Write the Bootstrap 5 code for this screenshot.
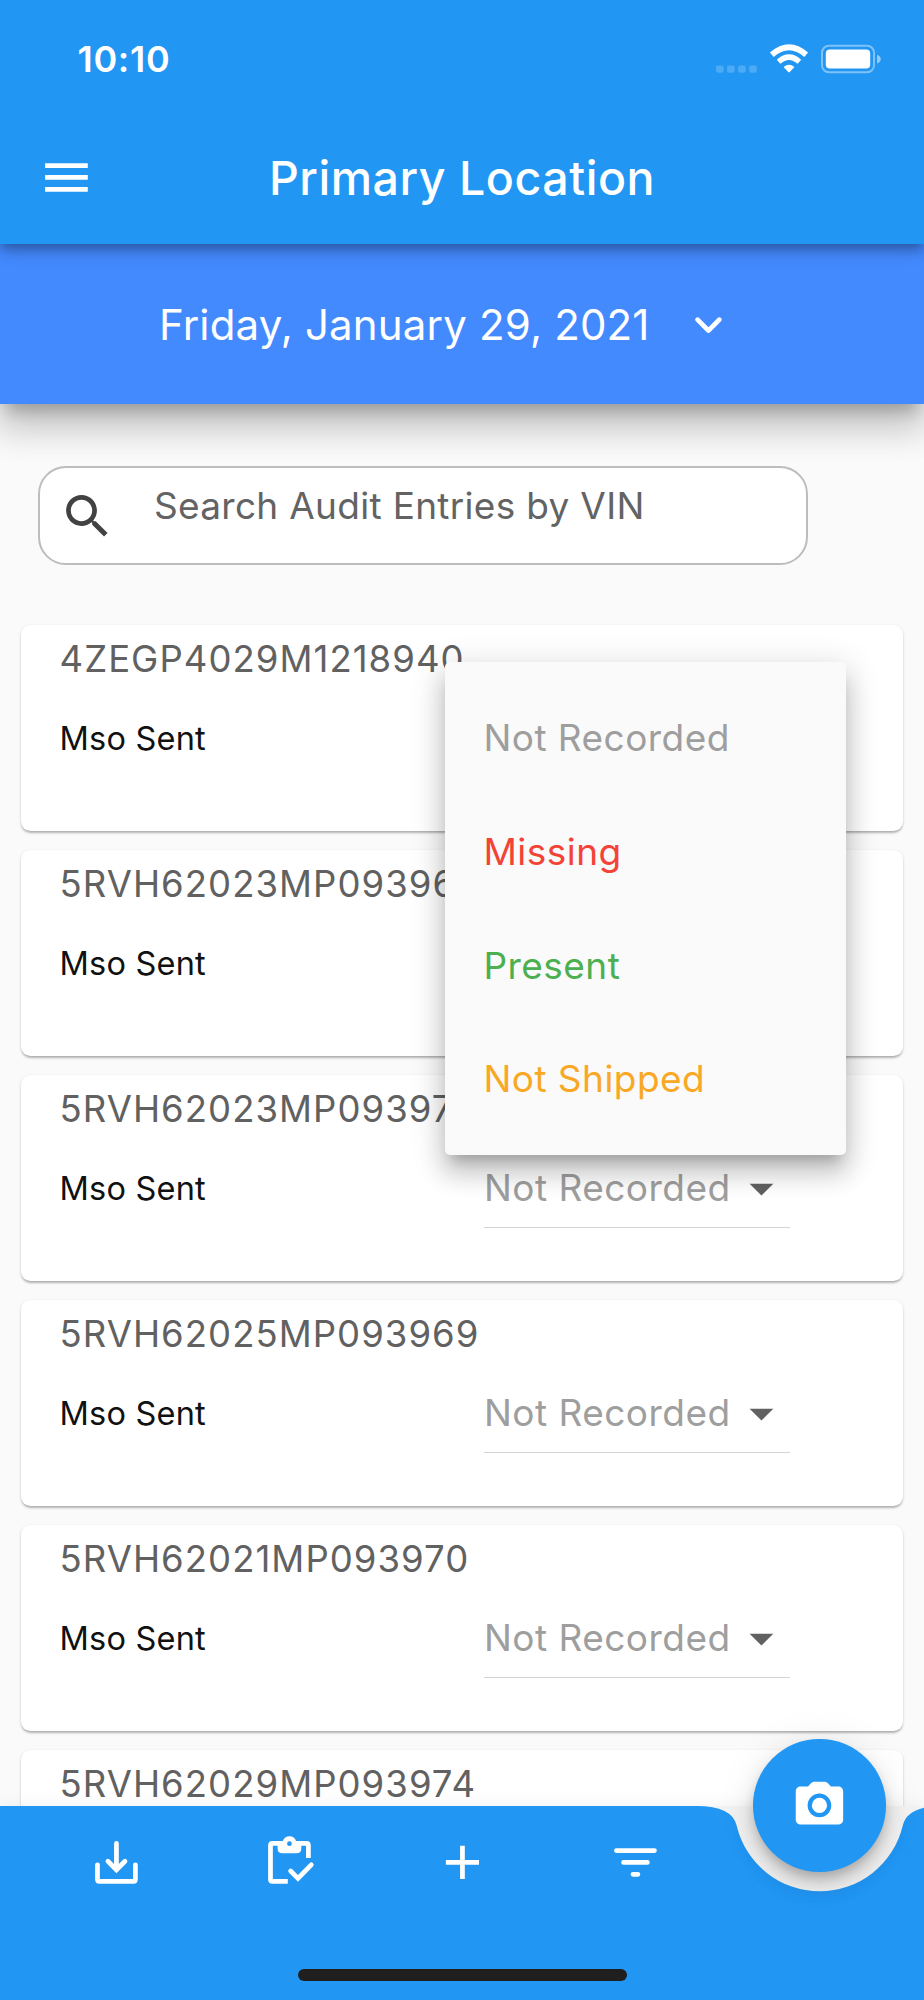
<!DOCTYPE html>
<html lang="en">
<head>
<meta charset="utf-8">
<meta name="viewport" content="width=device-width, initial-scale=1">
<title>Primary Location</title>
<link href="https://cdn.jsdelivr.net/npm/bootstrap@5.3.0/dist/css/bootstrap.min.css" rel="stylesheet">
<style>
body{font-family:Inter,"Liberation Sans",sans-serif;background:#fafafa;margin:0}
.screen{width:924px;height:2000px}
.app-head{background:#2196f3;height:244px;z-index:3;box-shadow:0 5px 9px -2px rgba(0,0,0,.2),0 9px 12px rgba(0,0,0,.14),0 2px 24px rgba(0,0,0,.12)}
.status{height:111px;padding:7px 43px 0 77.5px}
.clock{font-size:36px;font-weight:600;letter-spacing:.7px;line-height:44px}
.toolbar{height:133px}
.menu-btn{padding:0 0 0 37.5px}
.title{font-size:46.5px;font-weight:500;letter-spacing:.55px;line-height:60px}
.ico{width:56.9px;height:56.9px;display:block;fill:currentColor}
.date-bar{background:#448aff;height:160px;z-index:2;padding:1px 0 0 159px;box-shadow:0 14px 14px -7px rgba(0,0,0,.2),0 24px 33px 2px rgba(0,0,0,.14),0 9px 43px 7px rgba(0,0,0,.12)}
.date-text{font-size:42px;letter-spacing:.17px;line-height:52px;width:521px}
.search{width:770px;height:99px;margin:62px 0 60px 38px;border:2px solid #bdbdbd;border-radius:28px;background:#fff;padding-left:19px;z-index:4}
.search .ico{color:#424242;margin-top:1px}
.search-text{font-size:37px;letter-spacing:.31px;line-height:48px;color:#636363;margin:0 0 20px 38px}
.entries{gap:19.5px;padding:0 21px}
.entry{height:205.5px;flex:none;border:0;border-radius:9.5px;padding:14px 113.5px 0 38.5px;box-shadow:0 2.4px 2.4px -1px rgba(0,0,0,.22),0 1px 3px rgba(0,0,0,.16)}
.vin{font-size:36.5px;letter-spacing:1.05px;line-height:40px;color:#616161}
.entry-row{margin-top:20.5px;height:78px}
.state{font-size:32.5px;letter-spacing:.2px;line-height:40px;color:#111}
.pick{width:305.5px;border-bottom:1.5px solid #d4d4d4;font-size:37px;letter-spacing:.47px;color:#9e9e9e;white-space:nowrap}
.pick .ico{color:#616161}
.pop{left:445px;top:662.3px;width:400.5px;padding:19px 0;background:#fafafa;border-radius:5px;z-index:6;box-shadow:0 12px 12px -7px rgba(0,0,0,.2),0 19px 24px 2px rgba(0,0,0,.14),0 7px 33px 5px rgba(0,0,0,.12)}
.opt{height:113.7px;padding-left:38.5px;font-size:37px;letter-spacing:.45px}
.bottom{left:0;top:1805.5px;width:924px;height:194.5px;background:#f2f2f2;z-index:7;box-shadow:0 0 18px rgba(0,0,0,.06)}
.bar-shape{left:0;top:0;z-index:1}
.actions{z-index:2;padding:28px 0 0 29.5px}
.slot{width:173px}
.fab{left:753.2px;top:1739px;width:132.6px;height:132.6px;background:#2196f3;z-index:8;box-shadow:0 7px 12px -2px rgba(0,0,0,.2),0 14px 24px rgba(0,0,0,.12),0 2px 40px rgba(0,0,0,.08)}
.home{left:297.5px;top:163.3px;width:329.5px;height:12px;background:#1f1f1f;z-index:3}
</style>
</head>
<body>
<div class="screen position-relative overflow-hidden d-flex flex-column">
  <header class="app-head position-relative text-white flex-shrink-0">
    <div class="status d-flex align-items-center justify-content-between">
      <span class="clock">10:10</span>
      <svg width="165" height="30" viewBox="716 43.500 165 30">
        <g fill="#fff" fill-opacity=".2"><rect x="716" y="65" width="7.6" height="7.2" rx="2"/><rect x="727" y="65" width="7.6" height="7.2" rx="2"/><rect x="738.1" y="65" width="7.6" height="7.2" rx="2"/><rect x="749.2" y="65" width="7.6" height="7.2" rx="2"/></g>
        <g fill="none" stroke="#fff"><path d="M771.8 54.2Q789 39.2 806.2 54.2" stroke-width="5.8"/><path d="M778.6 61.2Q789 52 799.4 61.2" stroke-width="5.4"/></g>
        <path d="M783.6 66.6Q789 62 794.4 66.6L789.8 71.5Q789 72.3 788.2 71.5Z" fill="#fff"/>
        <rect x="822" y="45.2" width="52" height="26.6" rx="7" fill="none" stroke="#fff" stroke-opacity=".42" stroke-width="2"/>
        <rect x="825.8" y="49" width="44.4" height="19" rx="4" fill="#fff"/>
        <path d="M877 54.2Q880.8 55.5 880.8 58.6Q880.8 61.700 877 63Z" fill="#fff" fill-opacity=".5"/>
      </svg>
    </div>
    <div class="toolbar position-relative d-flex align-items-center">
      <div class="menu-btn"><svg class="ico" viewBox="0 0 24 24"><path d="M3 18h18v-2H3v2zm0-5h18v-2H3v2zm0-7v2h18V6H3z"/></svg></div>
      <h1 class="title position-absolute start-0 end-0 m-0 text-center">Primary Location</h1>
    </div>
  </header>

  <div class="date-bar position-relative d-flex align-items-center text-white flex-shrink-0">
    <span class="date-text">Friday, January 29, 2021</span>
    <svg class="ico" viewBox="0 0 24 24"><path d="M8.120 9.290L12 13.170l3.880-3.880c.39-.39 1.020-.39 1.410 0 .39.39.39 1.020 0 1.410l-4.590 4.590c-.39.39-1.020.39-1.410 0L6.700 10.700c-.39-.39-.39-1.020 0-1.410.39-.38 1.030-.39 1.420 0z"/></svg>
  </div>

  <div class="search position-relative d-flex align-items-center flex-shrink-0">
    <svg class="ico" viewBox="0 0 24 24"><path d="M15.500 14h-.79l-.28-.27C15.410 12.590 16 11.110 16 9.500 16 5.910 13.090 3 9.500 3S3 5.910 3 9.500 5.910 16 9.500 16c1.610 0 3.090-.59 4.230-1.570l.27.28v.79l5 4.990L20.490 19l-4.990-5zm-6 0C7.010 14 5 11.990 5 9.500S7.010 5 9.500 5 14 7.010 14 9.500 11.990 14 9.500 14z"/></svg>
    <span class="search-text">Search Audit Entries by VIN</span>
  </div>

  <main class="entries d-flex flex-column">
    <article class="entry card"><div class="vin">4ZEGP4029M1218940</div><div class="entry-row d-flex align-items-center"><span class="state">Mso Sent</span></div></article>
    <article class="entry card"><div class="vin">5RVH62023MP093968</div><div class="entry-row d-flex align-items-center"><span class="state">Mso Sent</span></div></article>
    <article class="entry card"><div class="vin">5RVH62023MP093971</div><div class="entry-row d-flex justify-content-between"><span class="state align-self-center">Mso Sent</span><div class="pick d-flex align-items-center justify-content-between"><span>Not Recorded</span><svg class="ico" viewBox="0 0 24 24"><path d="M7 10l5 5 5-5z"/></svg></div></div></article>
    <article class="entry card"><div class="vin">5RVH62025MP093969</div><div class="entry-row d-flex justify-content-between"><span class="state align-self-center">Mso Sent</span><div class="pick d-flex align-items-center justify-content-between"><span>Not Recorded</span><svg class="ico" viewBox="0 0 24 24"><path d="M7 10l5 5 5-5z"/></svg></div></div></article>
    <article class="entry card"><div class="vin">5RVH62021MP093970</div><div class="entry-row d-flex justify-content-between"><span class="state align-self-center">Mso Sent</span><div class="pick d-flex align-items-center justify-content-between"><span>Not Recorded</span><svg class="ico" viewBox="0 0 24 24"><path d="M7 10l5 5 5-5z"/></svg></div></div></article>
    <article class="entry card"><div class="vin">5RVH62029MP093974</div></article>
  </main>

  <div class="pop position-absolute">
    <div class="opt d-flex align-items-center" style="color:#9e9e9e">Not Recorded</div>
    <div class="opt d-flex align-items-center" style="color:#f44336">Missing</div>
    <div class="opt d-flex align-items-center" style="color:#4caf50">Present</div>
    <div class="opt d-flex align-items-center" style="color:#f9a825">Not Shipped</div>
  </div>

  <nav class="bottom position-absolute text-white">
    <svg class="bar-shape position-absolute" width="924" height="195" viewBox="0 0 924 195"><path fill="#2196f3" d="M0 0H696.500Q732.100 0 736.700 19.700A85.300 85.300 0 0 0 902.700 19.700Q907.300 0 942.900 0V195H0Z"/></svg>
    <div class="actions position-relative d-flex">
      <div class="slot d-flex justify-content-center"><svg class="ico" viewBox="0 0 24 24"><g fill="none" stroke="currentColor" stroke-width="2" stroke-linecap="round" stroke-linejoin="round"><path d="M4 13v6.200q0 .8.8.8h14.400q.8 0 .8-.8V13M12 4v11"/><path stroke-linejoin="miter" d="M8.400 11.500L12 15.100l3.600-3.600"/></g></svg></div>
      <div class="slot d-flex justify-content-center"><svg class="ico overflow-visible" viewBox="0 0 24 24"><g fill="none" stroke="currentColor" stroke-width="2"><path d="M11.300 20H4.800q-.8 0-.8-.8V4.800q0-.8.8-.8h3M16.200 4h3q.8 0 .8.8v5.300"/><path stroke-linecap="round" d="M12.500 15.600l3.100 3.100 5.600-5.700"/></g><path fill-rule="evenodd" d="M7 3h2.200a2.950 2.950 0 0 1 5.600 0H17v3.100q0 2-2 2H9q-2 0-2-2zM12 3.100a1 1 0 1 0 0 2 1 1 0 0 0 0-2z"/></svg></div>
      <div class="slot d-flex justify-content-center"><svg class="ico" viewBox="0 0 24 24"><path d="M19 13h-6v6h-2v-6H5v-2h6V5h2v6h6v2z"/></svg></div>
      <div class="slot d-flex justify-content-center"><svg class="ico" viewBox="0 0 24 24"><rect x="3" y="6" width="18" height="2" rx=".9"/><rect x="6" y="11" width="12" height="2" rx=".9"/><rect x="10" y="16" width="4" height="2" rx=".9"/></svg></div>
    </div>
    <div class="home position-absolute rounded-pill"></div>
  </nav>
  <div class="fab position-absolute rounded-circle d-flex align-items-center justify-content-center text-white">
    <svg class="ico" viewBox="0 0 24 24"><circle cx="12" cy="12" r="3.200"/><path d="M20 4h-3.170l-1.240-1.350c-.37-.41-.91-.65-1.470-.65H9.880c-.56 0-1.100.24-1.480.65L7.170 4H4c-1.100 0-2 .9-2 2v12c0 1.100.9 2 2 2h16c1.100 0 2-.9 2-2V6c0-1.100-.9-2-2-2zm-8 13c-2.760 0-5-2.240-5-5s2.240-5 5-5 5 2.240 5 5-2.240 5-5 5z"/></svg>
  </div>
</div>
<script src="https://cdn.jsdelivr.net/npm/bootstrap@5.3.0/dist/js/bootstrap.bundle.min.js"></script>
</body>
</html>
